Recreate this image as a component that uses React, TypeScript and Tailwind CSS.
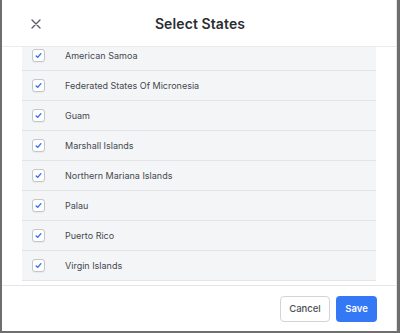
import { useState } from 'react'

const STATES = [
  'American Samoa',
  'Federated States Of Micronesia',
  'Guam',
  'Marshall Islands',
  'Northern Mariana Islands',
  'Palau',
  'Puerto Rico',
  'Virgin Islands',
]

function Check({ on, onClick }: { on: boolean; onClick: () => void }) {
  return (
    <button
      type="button"
      onClick={onClick}
      className="w-[13px] h-[13px] rounded-[3px] border border-[#c3c6cb] bg-white flex items-center justify-center flex-shrink-0 shadow-[0_1px_1px_rgba(0,0,0,0.05)]"
    >
      {on && (
        <svg width="7" height="7" viewBox="0 0 8 8" fill="none">
          <path d="M1.3 4.5 L3.1 6.1 L6.7 1.9" stroke="#2f6ff5" strokeWidth="1.6" strokeLinecap="round" strokeLinejoin="round" />
        </svg>
      )}
    </button>
  )
}

export default function App() {
  const [checked, setChecked] = useState<Record<string, boolean>>(
    Object.fromEntries(STATES.map((s) => [s, true])),
  )

  return (
    <div className="w-[400px] h-[333px] bg-[#6e6e6e] pl-[2px] pr-[3px] pb-[2px] flex" style={{ fontFamily: 'Inter, "Noto Sans", sans-serif' }}>
      <div className="flex-1 bg-white flex flex-col border-r border-[#e4e4e4] overflow-hidden">
        <div className="h-[47px] border-b border-[#ebebeb] relative flex items-center justify-center flex-shrink-0">
          <button type="button" className="absolute left-[28px] top-[18px] w-[12px] h-[12px] flex items-center justify-center">
            <svg width="10" height="10" viewBox="0 0 10 10" fill="none">
              <path d="M1 1 L9 9 M9 1 L1 9" stroke="#555a60" strokeWidth="1.3" strokeLinecap="round" />
            </svg>
          </button>
          <h1 className="text-[14px] font-semibold text-[#2a2e33] tracking-[0.1px] ml-[2px]">Select States</h1>
        </div>

        <div className="h-[238px] overflow-hidden px-[20px] flex-shrink-0">
          <div className="-mt-[6px]">
            {STATES.map((s) => (
              <div key={s} className="h-[30px] bg-[#f4f5f7] border-b border-[#e3e4e8] flex items-center pl-[10px] gap-[20px]">
                <Check on={checked[s]} onClick={() => setChecked({ ...checked, [s]: !checked[s] })} />
                <span className="text-[9px] text-[#44494f]">{s}</span>
              </div>
            ))}
          </div>
        </div>

        <div className="flex-1 border-t border-[#e6e6e6] flex items-center justify-end gap-[6px] pr-[19px] pt-[1px]">
          <button type="button" className="h-[26px] w-[50px] rounded-[4px] border border-[#d2d4d8] bg-white text-[9.5px] font-medium text-[#4a4f55]">
            Cancel
          </button>
          <button type="button" className="h-[26px] w-[41px] rounded-[4px] bg-[#3478f6] text-[9.5px] font-semibold text-white">
            Save
          </button>
        </div>
      </div>
    </div>
  )
}
